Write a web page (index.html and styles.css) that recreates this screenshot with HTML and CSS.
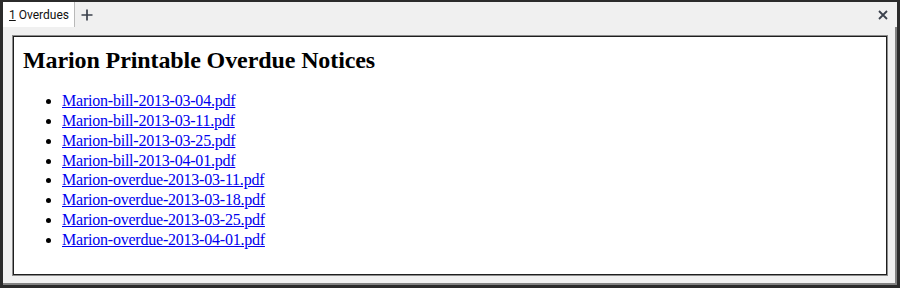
FILE: index.html
```html
<!DOCTYPE html>
<html>
<head>
<meta charset="utf-8">
<link rel="stylesheet" href="styles.css">
</head>
<body>
<div class="window">
  <div class="tabbar">
    <div class="tab"><span class="accel">1</span>&nbsp;Overdues</div>
    <div class="add">
      <svg width="12" height="12" viewBox="0 0 12 12"><path d="M6 0.5V11.5M0.5 6H11.5" stroke="#3b414c" stroke-width="1.7" fill="none"/></svg>
    </div>
    <div class="spacer"></div>
    <div class="close">
      <svg width="10" height="10" viewBox="0 0 10 10"><path d="M1 1L9 9M9 1L1 9" stroke="#3b414c" stroke-width="1.8" fill="none"/></svg>
    </div>
  </div>
  <div class="panel">
    <div class="frame">
      <h2 class="title">Marion Printable Overdue Notices</h2>
      <ul class="files">
        <li><a href="#">Marion-bill-2013-03-04.pdf</a></li>
        <li><a href="#">Marion-bill-2013-03-11.pdf</a></li>
        <li><a href="#">Marion-bill-2013-03-25.pdf</a></li>
        <li><a href="#">Marion-bill-2013-04-01.pdf</a></li>
        <li><a href="#">Marion-overdue-2013-03-11.pdf</a></li>
        <li><a href="#">Marion-overdue-2013-03-18.pdf</a></li>
        <li><a href="#">Marion-overdue-2013-03-25.pdf</a></li>
        <li><a href="#">Marion-overdue-2013-04-01.pdf</a></li>
      </ul>
    </div>
  </div>
</div>
</body>
</html>
```
FILE: styles.css
```css
html, body {
  margin: 0;
  padding: 0;
}
body {
  width: 900px;
  height: 288px;
  background: #2b2b2b;
  box-sizing: border-box;
  padding: 2px 3px 3px 3px;
  overflow: hidden;
}
.window {
  display: flex;
  flex-direction: column;
  height: 283px;
  background: #f0f0f0;
}
.tabbar {
  display: flex;
  align-items: stretch;
  height: 25px;
  flex: none;
}
.tab {
  background: #ffffff;
  border-right: 1px solid #b9b9b9;
  width: 72px;
  box-sizing: border-box;
  display: flex;
  align-items: center;
  padding-left: 6px;
  font-family: Roboto, "Noto Sans", sans-serif;
  font-size: 12px;
  color: #111;
}
.accel {
  text-decoration: underline;
}
.add {
  width: 23px;
  display: flex;
  align-items: center;
  justify-content: center;
}
.spacer {
  flex: 1;
}
.close {
  width: 24px;
  display: flex;
  align-items: center;
  justify-content: center;
  padding-right: 2px;
}
.panel {
  flex: 1;
  display: flex;
  padding: 8px 7px 7px 9px;
  border-right: 2px solid #828282;
  border-bottom: 2px solid #828282;
}
.frame {
  flex: 1;
  background: #ffffff;
  border: 1px solid #8c8c8c;
  box-shadow: inset 0 0 0 1px #1e1e1e;
  padding: 10px 9px 0 10px;
  font-family: "Liberation Serif", "Times New Roman", serif;
  color: #000;
}
.title {
  margin: 0 0 17px 0;
  font-size: 24px;
  line-height: 28px;
  font-weight: bold;
  letter-spacing: -0.1px;
}
.files {
  margin: 0;
  padding-left: 39px;
  font-size: 16px;
  line-height: 19.85px;
}
.files a {
  color: #0000ee;
  text-decoration: underline;
  letter-spacing: -0.22px;
}
```
